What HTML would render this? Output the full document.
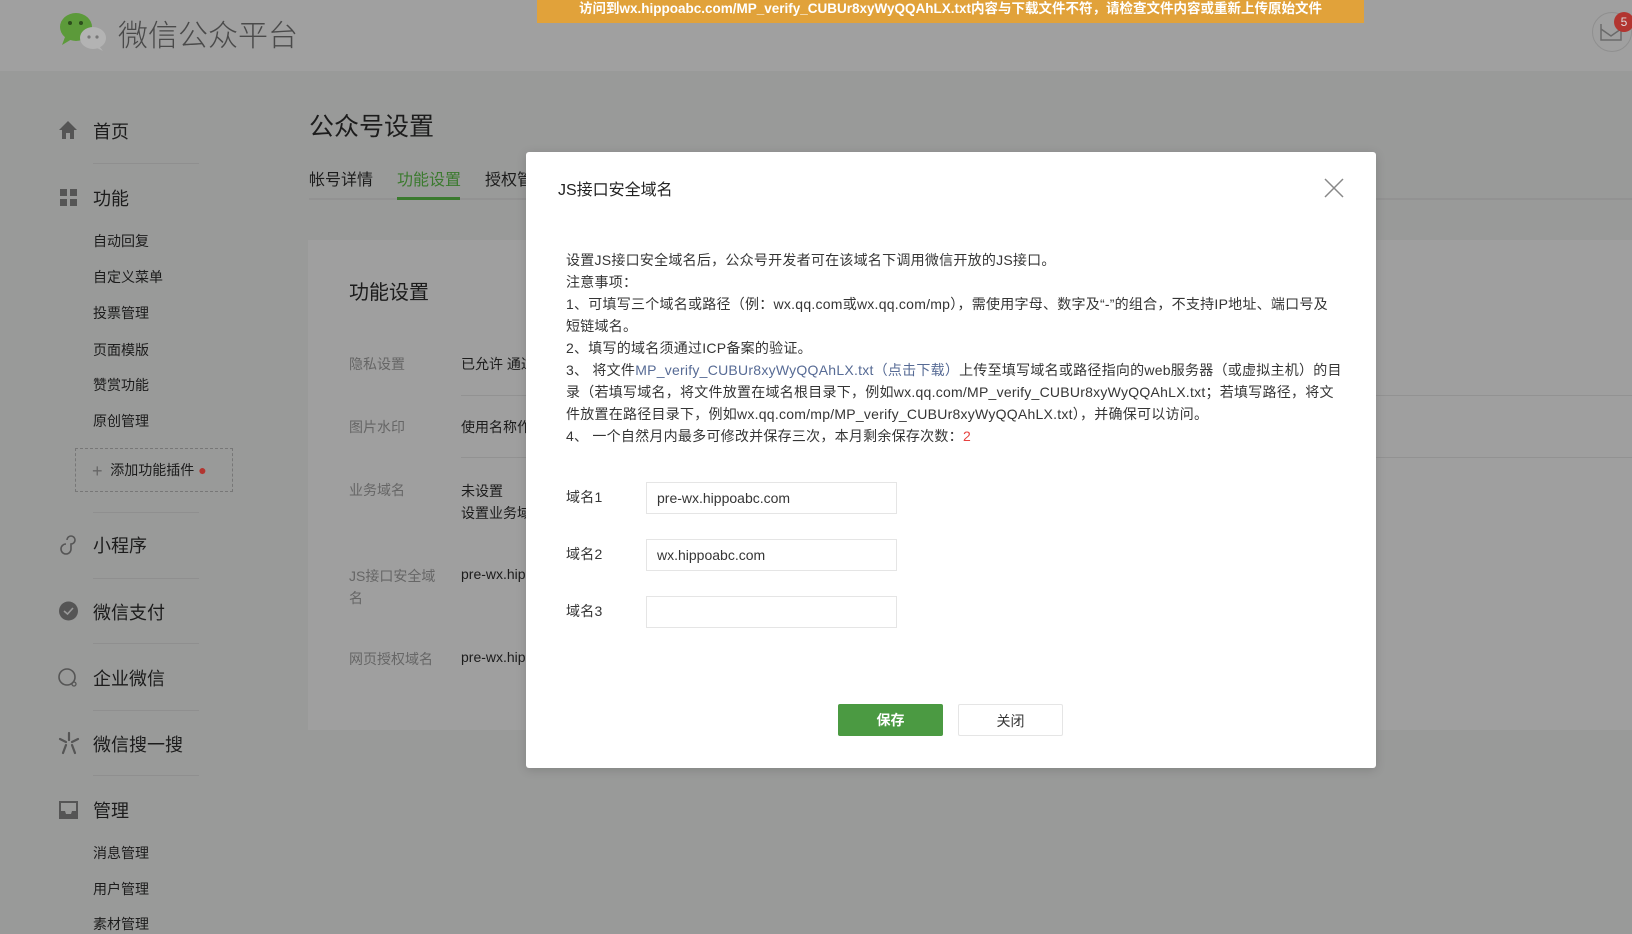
<!DOCTYPE html>
<html><head><meta charset="utf-8"><style>
*{margin:0;padding:0;box-sizing:border-box}
body{width:1632px;height:926px;overflow:hidden;background:#999a99;font-family:"Liberation Sans","Noto Sans CJK SC",sans-serif;position:relative;color:#1c1c1c}
.a{position:absolute;white-space:nowrap}
.hdr{left:0;top:0;width:1632px;height:71px;background:#a0a0a0}
.banner{left:537px;top:0;width:827px;height:23px;background:#e1a23a;color:#fff;font-size:13.5px;font-weight:bold;text-align:center;line-height:18px}
.side{font-size:18px;color:#1c1c1c}
.sub{font-size:14px;color:#1c1c1c}
.sep{height:1px;width:106px;left:93px;background:#8f8f8f}
.card{left:308px;top:240px;width:1324px;height:490px;background:#9f9f9f}
.lbl{font-size:14px;color:#666}
.val{font-size:14px;color:#1c1c1c}
.modal{left:526px;top:152px;width:850px;height:616px;background:#fff;border-radius:3px;box-shadow:0 2px 10px rgba(0,0,0,.15)}
.mt{font-size:14px;letter-spacing:.25px;color:#353535;line-height:22px}
.inp{width:251px;height:32px;border:1px solid #e5e5e5;font-size:14px;color:#353535;padding-left:10px;line-height:30px}
.btn{width:105px;height:32px;border-radius:2px;font-size:14px;text-align:center;line-height:32px}
</style></head><body>
<div class="a hdr"></div>
<svg class="a" style="left:57px;top:11px" width="52" height="40" viewBox="0 0 52 40"><ellipse cx="19" cy="16" rx="16" ry="14" fill="#5c9a3a"/><path d="M8 26 L5 34 L15 28Z" fill="#5c9a3a"/><circle cx="13" cy="12" r="2" fill="#2d4d1d"/><circle cx="24" cy="12" r="2" fill="#2d4d1d"/><ellipse cx="36" cy="27" rx="13" ry="11" fill="#b3b3b3"/><path d="M42 35 L46 40 L38 36Z" fill="#b3b3b3"/><circle cx="32" cy="26" r="1.6" fill="#777"/><circle cx="40" cy="26" r="1.6" fill="#777"/></svg>
<div class="a" style="left:118px;top:11px;font-size:30px;color:#4a4a4a;font-weight:300">微信公众平台</div>
<div class="a banner">访问到wx.hippoabc.com/MP_verify_CUBUr8xyWyQQAhLX.txt内容与下载文件不符，请检查文件内容或重新上传原始文件</div>
<div class="a" style="left:1592px;top:12px;width:40px;height:40px;border:1px solid #8f8f8f;border-radius:50%"></div>
<svg class="a" style="left:1600px;top:23px" width="22" height="18" viewBox="0 0 22 18"><path d="M1 1 V17 H21 V6 M1 6 L11 13 L21 6" fill="none" stroke="#6a6a6a" stroke-width="1.5"/></svg>
<div class="a" style="left:1614px;top:12px;width:20px;height:20px;border-radius:50%;background:#b23530;color:#ddd;font-size:12px;text-align:center;line-height:20px">5</div>

<svg class="a" style="left:58px;top:120px" width="20" height="20" viewBox="0 0 20 20"><path d="M10 1 L1 10 H4 V19 H8 V13 H12 V19 H16 V10 H19Z" fill="#555"/></svg>
<div class="a side" style="left:93px;top:118px">首页</div>
<div class="a sep" style="top:163px"></div>
<svg class="a" style="left:60px;top:189px" width="17" height="17"><rect x="0" y="0" width="7" height="7" fill="#555"/><rect x="10" y="0" width="7" height="7" fill="#555"/><rect x="0" y="10" width="7" height="7" fill="#555"/><rect x="10" y="10" width="7" height="7" fill="#555"/></svg>
<div class="a side" style="left:93px;top:185px">功能</div>
<div class="a sub" style="left:93px;top:231px">自动回复</div>
<div class="a sub" style="left:93px;top:267px">自定义菜单</div>
<div class="a sub" style="left:93px;top:303px">投票管理</div>
<div class="a sub" style="left:93px;top:340px">页面模版</div>
<div class="a sub" style="left:93px;top:375px">赞赏功能</div>
<div class="a sub" style="left:93px;top:411px">原创管理</div>
<div class="a" style="left:75px;top:448px;width:158px;height:44px;border:1px dashed #777"></div>
<div class="a sub" style="left:92px;top:460px"><span style="font-size:18px;color:#666;vertical-align:-2px">+</span>&nbsp; 添加功能插件 <span style="color:#b23530">●</span></div>
<div class="a sep" style="top:512px"></div>
<svg class="a" style="left:58px;top:534px" width="20" height="22"><path d="M9 6 a4 4 0 1 1 4 4 v5 a5 5 0 1 1 -5 -5" fill="none" stroke="#555" stroke-width="1.6"/></svg>
<div class="a side" style="left:93px;top:532px">小程序</div>
<div class="a sep" style="top:578px"></div>
<svg class="a" style="left:58px;top:601px" width="21" height="21"><circle cx="10.5" cy="10" r="9.5" fill="#555"/><path d="M6 10 L9.5 13 L15 7" fill="none" stroke="#999" stroke-width="1.6"/></svg>
<div class="a side" style="left:93px;top:599px">微信支付</div>
<div class="a sep" style="top:643px"></div>
<svg class="a" style="left:57px;top:667px" width="22" height="22"><circle cx="10" cy="10" r="8" fill="none" stroke="#555" stroke-width="1.6"/><circle cx="17" cy="17" r="2" fill="none" stroke="#555" stroke-width="1.3"/></svg>
<div class="a side" style="left:93px;top:665px">企业微信</div>
<div class="a sep" style="top:710px"></div>
<svg class="a" style="left:57px;top:731px" width="24" height="24"><path d="M12 2 V9 M3 8 L9 11 M21 8 L15 11 M9 14 L6 22 M15 14 L18 22" stroke="#555" stroke-width="2.2" stroke-linecap="round"/></svg>
<div class="a side" style="left:93px;top:731px">微信搜一搜</div>
<div class="a sep" style="top:775px"></div>
<svg class="a" style="left:59px;top:800px" width="19" height="19"><path d="M1 2 h17 v16 h-17z" fill="none" stroke="#555" stroke-width="2"/><path d="M1 11 h5 l1 3 h5 l1 -3 h5 v7 h-17z" fill="#555"/></svg>
<div class="a side" style="left:93px;top:797px">管理</div>
<div class="a sub" style="left:93px;top:843px">消息管理</div>
<div class="a sub" style="left:93px;top:879px">用户管理</div>
<div class="a sub" style="left:93px;top:914px">素材管理</div>

<div class="a" style="left:309px;top:107px;font-size:25px;color:#1c1c1c">公众号设置</div>
<div class="a" style="left:309px;top:198px;width:1323px;height:2px;background:#929292"></div>
<div class="a" style="left:309px;top:166px;font-size:16px">帐号详情</div>
<div class="a" style="left:397px;top:166px;font-size:16px;color:#3b7a2e">功能设置</div>
<div class="a" style="left:397px;top:197px;width:63px;height:3px;background:#3b7a2e"></div>
<div class="a" style="left:485px;top:166px;font-size:16px">授权管理</div>
<div class="a card"></div>
<div class="a" style="left:349px;top:276px;font-size:20px">功能设置</div>
<div class="a lbl" style="left:349px;top:354px">隐私设置</div><div class="a val" style="left:461px;top:354px">已允许 通过名称搜索</div>
<div class="a" style="left:461px;top:395px;width:1171px;height:1px;background:#929292"></div>
<div class="a lbl" style="left:349px;top:417px">图片水印</div><div class="a val" style="left:461px;top:417px">使用名称作为水印</div>
<div class="a" style="left:461px;top:457px;width:1171px;height:1px;background:#929292"></div>
<div class="a lbl" style="left:349px;top:480px">业务域名</div><div class="a val" style="left:461px;top:480px;line-height:22px">未设置<br>设置业务域名</div>
<div class="a lbl" style="left:349px;top:565px;line-height:22px">JS接口安全域<br>名</div><div class="a val" style="left:461px;top:566px">pre-wx.hippoabc.com</div>
<div class="a lbl" style="left:349px;top:649px">网页授权域名</div><div class="a val" style="left:461px;top:649px">pre-wx.hippoabc.com</div>

<div class="a modal">
<div class="a" style="left:32px;top:24px;font-size:16px;color:#222">JS接口安全域名</div>
<svg class="a" style="left:798px;top:26px" width="20" height="20"><path d="M1 1 L19 19 M19 1 L1 19" stroke="#888" stroke-width="1.5"/></svg>
<div class="a mt" style="left:40px;top:97px">设置JS接口安全域名后，公众号开发者可在该域名下调用微信开放的JS接口。<br>注意事项：<br>1、可填写三个域名或路径（例：wx.qq.com或wx.qq.com/mp），需使用字母、数字及“-”的组合，不支持IP地址、端口号及<br>短链域名。<br>2、填写的域名须通过ICP备案的验证。<br>3、 将文件<span style="color:#576b95">MP_verify_CUBUr8xyWyQQAhLX.txt（点击下载）</span>上传至填写域名或路径指向的web服务器（或虚拟主机）的目<br>录（若填写域名，将文件放置在域名根目录下，例如wx.qq.com/MP_verify_CUBUr8xyWyQQAhLX.txt；若填写路径，将文<br>件放置在路径目录下，例如wx.qq.com/mp/MP_verify_CUBUr8xyWyQQAhLX.txt），并确保可以访问。<br>4、 一个自然月内最多可修改并保存三次，本月剩余保存次数：<span style="color:#e64340">2</span></div>
<div class="a mt" style="left:40px;top:334px">域名1</div><div class="a inp" style="left:120px;top:330px">pre-wx.hippoabc.com</div>
<div class="a mt" style="left:40px;top:391px">域名2</div><div class="a inp" style="left:120px;top:387px">wx.hippoabc.com</div>
<div class="a mt" style="left:40px;top:448px">域名3</div><div class="a inp" style="left:120px;top:444px"></div>
<div class="a btn" style="left:312px;top:552px;background:#4b9a42;color:#fff;font-weight:bold">保存</div>
<div class="a btn" style="left:432px;top:552px;border:1px solid #e5e5e5;color:#353535">关闭</div>
</div>
</body></html>
